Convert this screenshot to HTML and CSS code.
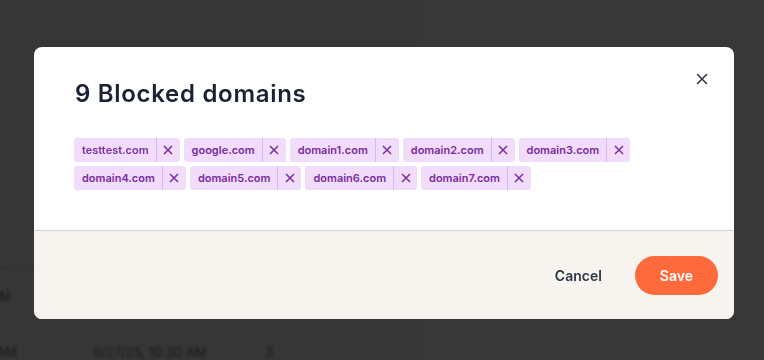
FILE: index.html
```html
<!DOCTYPE html>
<html lang="en">
<head>
    <meta charset="UTF-8">
    <meta name="viewport" content="width=device-width, initial-scale=1.0">
    <title>Blocked domains</title>
    <link rel="stylesheet" href="styles.css">
</head>
<body>
    <!-- page behind the dialog -->
    <div class="page">
        <div class="pane pane-left">
            <table class="log">
                <thead>
                    <tr><th>Date</th><th>Last seen</th><th>Hits</th></tr>
                </thead>
                <tbody>
                    <tr><td>9/27/25, 9:41 AM</td><td>9/27/25, 9:58 AM</td><td>1</td></tr>
                    <tr><td>9/27/25, 10:01 AM</td><td>9/27/25, 10:30 AM</td><td>3</td></tr>
                </tbody>
            </table>
        </div>
        <div class="pane pane-right"></div>
    </div>

    <div class="overlay">
        <div class="modal">
            <button class="close-btn" aria-label="Close">
                <svg width="12" height="12" viewBox="0 0 12 12"><path d="M1.5 1.5 L10.5 10.5 M10.5 1.5 L1.5 10.5" stroke="#2d3748" stroke-width="1.6" stroke-linecap="round" fill="none"/></svg>
            </button>
            <div class="modal-body">
                <h2 class="modal-title">9 Blocked domains</h2>
                <div class="tags">
                    <span class="tag"><span class="tag-label">testtest.com</span><button class="tag-remove"><svg width="10" height="10" viewBox="0 0 10 10"><path d="M1 1 L9 9 M9 1 L1 9"/></svg></button></span>
                    <span class="tag"><span class="tag-label">google.com</span><button class="tag-remove"><svg width="10" height="10" viewBox="0 0 10 10"><path d="M1 1 L9 9 M9 1 L1 9"/></svg></button></span>
                    <span class="tag"><span class="tag-label">domain1.com</span><button class="tag-remove"><svg width="10" height="10" viewBox="0 0 10 10"><path d="M1 1 L9 9 M9 1 L1 9"/></svg></button></span>
                    <span class="tag"><span class="tag-label">domain2.com</span><button class="tag-remove"><svg width="10" height="10" viewBox="0 0 10 10"><path d="M1 1 L9 9 M9 1 L1 9"/></svg></button></span>
                    <span class="tag"><span class="tag-label">domain3.com</span><button class="tag-remove"><svg width="10" height="10" viewBox="0 0 10 10"><path d="M1 1 L9 9 M9 1 L1 9"/></svg></button></span>
                    <span class="tag"><span class="tag-label">domain4.com</span><button class="tag-remove"><svg width="10" height="10" viewBox="0 0 10 10"><path d="M1 1 L9 9 M9 1 L1 9"/></svg></button></span>
                    <span class="tag"><span class="tag-label">domain5.com</span><button class="tag-remove"><svg width="10" height="10" viewBox="0 0 10 10"><path d="M1 1 L9 9 M9 1 L1 9"/></svg></button></span>
                    <span class="tag"><span class="tag-label">domain6.com</span><button class="tag-remove"><svg width="10" height="10" viewBox="0 0 10 10"><path d="M1 1 L9 9 M9 1 L1 9"/></svg></button></span>
                    <span class="tag"><span class="tag-label">domain7.com</span><button class="tag-remove"><svg width="10" height="10" viewBox="0 0 10 10"><path d="M1 1 L9 9 M9 1 L1 9"/></svg></button></span>
                </div>
            </div>
            <div class="modal-footer">
                <button class="btn btn-cancel">Cancel</button>
                <button class="btn btn-save">Save</button>
            </div>
        </div>
    </div>
</body>
</html>
```

FILE: styles.css
```css
* {
    box-sizing: border-box;
}
body {
    margin: 0;
    font-family: Inter, "Noto Sans", sans-serif;
    background: #fff;
    overflow: hidden;
}

/* page behind */
.page {
    display: flex;
    height: 360px;
}
.pane-left {
    width: 418px;
    background: #f6f6f6;
    overflow: hidden;
}
.pane-right {
    flex: 1;
    background: #fff;
}
.log {
    border-collapse: collapse;
    margin: 203px 0 0 -94px;
    font-size: 13px;
    color: #777;
}
.log th,
.log td {
    text-align: left;
    white-space: nowrap;
    padding: 0;
}
.log th {
    height: 65px;
    font-weight: 600;
    border-bottom: 1px solid #ccc;
}
.log td {
    height: 56px;
}
.log th:nth-child(1), .log td:nth-child(1) { width: 187px; }
.log th:nth-child(2), .log td:nth-child(2) { width: 172px; }

.overlay {
    position: fixed;
    inset: 0;
    background: rgba(0, 0, 0, 0.78);
    backdrop-filter: blur(1.5px);
    display: flex;
    align-items: flex-start;
    justify-content: center;
    padding: 47px 0 0 4px;
}

/* dialog */
.modal {
    position: relative;
    width: 700px;
    background: #fff;
    border-radius: 8px;
    overflow: hidden;
}
.close-btn {
    position: absolute;
    top: 24px;
    right: 24px;
    width: 16px;
    height: 16px;
    padding: 0;
    border: none;
    background: none;
    display: flex;
    align-items: center;
    justify-content: center;
    cursor: pointer;
}
.modal-body {
    padding: 31px 40px 40px 40px;
    border-bottom: 1px solid #d4d0cc;
}
.modal-title {
    margin: 0 0 28px 1px;
    font-size: 24px;
    line-height: 32px;
    font-weight: 600;
    letter-spacing: 0.7px;
    color: #1a2233;
}
.tags {
    display: flex;
    flex-wrap: wrap;
    gap: 4px;
}
.tag {
    display: flex;
    height: 24px;
    background: #f1dcfc;
    border-radius: 3px;
    color: #7a2d9d;
    font-size: 11px;
    font-weight: 600;
}
.tag-label {
    display: flex;
    align-items: center;
    padding: 0 7px 0 8px;
}
.tag-remove {
    width: 24px;
    padding: 0;
    border: none;
    border-left: 1px solid #dcb8ee;
    background: none;
    display: flex;
    align-items: center;
    justify-content: center;
    cursor: pointer;
}
.tag-remove path {
    stroke: #7a2d9d;
    stroke-width: 1.5;
    fill: none;
}

.modal-footer {
    height: 88px;
    background: #f7f4f0;
    display: flex;
    align-items: center;
    justify-content: flex-end;
    gap: 8px;
    padding: 0 16px;
}
.btn {
    height: 39px;
    padding: 0 25px;
    border: none;
    border-radius: 20px;
    font-family: inherit;
    font-size: 14px;
    font-weight: 600;
    cursor: pointer;
}
.btn-cancel {
    background: none;
    color: #2d3748;
}
.btn-save {
    background: #ff6a3d;
    color: #fff;
}
```
